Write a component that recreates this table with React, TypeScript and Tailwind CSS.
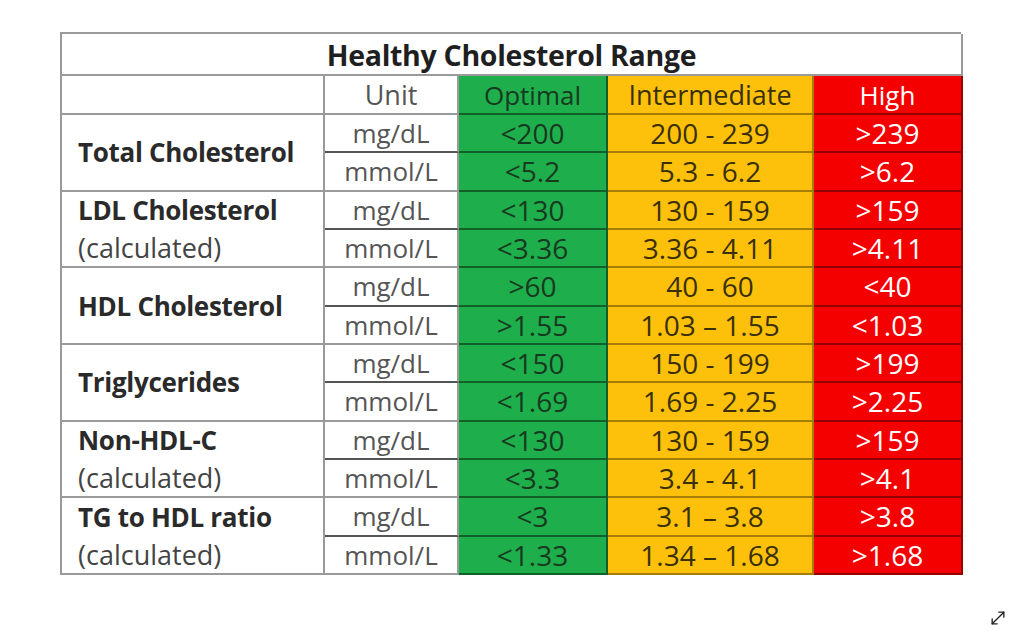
import React from "react";

type Row = { unit: string; opt: string; mid: string; high: string };
type Group = { title: string; sub?: string; rows: [Row, Row] };

const groups: Group[] = [
  {
    title: "Total Cholesterol",
    rows: [
      { unit: "mg/dL", opt: "<200", mid: "200 - 239", high: ">239" },
      { unit: "mmol/L", opt: "<5.2", mid: "5.3 - 6.2", high: ">6.2" },
    ],
  },
  {
    title: "LDL Cholesterol",
    sub: "(calculated)",
    rows: [
      { unit: "mg/dL", opt: "<130", mid: "130 - 159", high: ">159" },
      { unit: "mmol/L", opt: "<3.36", mid: "3.36 - 4.11", high: ">4.11" },
    ],
  },
  {
    title: "HDL Cholesterol",
    rows: [
      { unit: "mg/dL", opt: ">60", mid: "40 - 60", high: "<40" },
      { unit: "mmol/L", opt: ">1.55", mid: "1.03 \u2013 1.55", high: "<1.03" },
    ],
  },
  {
    title: "Triglycerides",
    rows: [
      { unit: "mg/dL", opt: "<150", mid: "150 - 199", high: ">199" },
      { unit: "mmol/L", opt: "<1.69", mid: "1.69 - 2.25", high: ">2.25" },
    ],
  },
  {
    title: "Non-HDL-C",
    sub: "(calculated)",
    rows: [
      { unit: "mg/dL", opt: "<130", mid: "130 - 159", high: ">159" },
      { unit: "mmol/L", opt: "<3.3", mid: "3.4 - 4.1", high: ">4.1" },
    ],
  },
  {
    title: "TG to HDL ratio",
    sub: "(calculated)",
    rows: [
      { unit: "mg/dL", opt: "<3", mid: "3.1 \u2013 3.8", high: ">3.8" },
      { unit: "mmol/L", opt: "<1.33", mid: "1.34 \u2013 1.68", high: ">1.68" },
    ],
  },
];

const whiteCell =
  "flex items-center justify-center border-r-2 border-b-2 border-[#9a9a9a]";
const greenCell =
  "flex items-center justify-center border-r-2 border-b-2 border-black/45 bg-[#1fae4c] text-[#173a1f]";
const yellowCell =
  "flex items-center justify-center border-r-2 border-b-2 border-black/35 bg-[#fdc10c] text-[#3a3008]";
const redCell =
  "flex items-center justify-center border-r-2 border-b-2 border-black/40 bg-[#f40000] text-white";

export default function App() {
  return (
    <div className="relative w-[1021px] h-[640px] bg-white font-['Open_Sans',sans-serif] overflow-hidden">
      <div className="pl-[60px] pt-[32px]">
        <div className="grid w-[901px] grid-cols-[263px_134px_149px_206px_149px] grid-rows-[42px_39px_repeat(12,38.33px)] border-l-2 border-t-2 border-[#9a9a9a] text-[28px] leading-none">
          <div className="col-span-5 flex items-center justify-center border-r-2 border-b-2 border-[#9a9a9a] pt-[3px] text-[28.5px] font-bold text-[#1f1f1f] tracking-[-0.3px]">
            Healthy Cholesterol Range
          </div>
          <div className={whiteCell} />
          <div className={`${whiteCell} text-[27px] text-[#555]`}>Unit</div>
          <div className={`${greenCell} text-[26px]`}>Optimal</div>
          <div className={`${yellowCell} text-[27px]`}>Intermediate</div>
          <div className={`${redCell} text-[26px]`}>High</div>
          {groups.map((g) => (
            <React.Fragment key={g.title}>
              {g.sub ? (
                <div className="row-span-2 grid grid-rows-2 border-r-2 border-b-2 border-[#9a9a9a] pl-[16px] text-[#2a2a2a]">
                  <div className="flex items-center text-[26px] font-bold tracking-[-0.3px]">
                    {g.title}
                  </div>
                  <div className="flex items-center text-[27px] text-[#444]">
                    {g.sub}
                  </div>
                </div>
              ) : (
                <div className="row-span-2 flex items-center border-r-2 border-b-2 border-[#9a9a9a] pl-[16px] text-[26px] font-bold tracking-[-0.3px] text-[#2a2a2a]">
                  {g.title}
                </div>
              )}
              {g.rows.map((r, i) => (
                <React.Fragment key={i}>
                  <div
                    className={`flex items-center justify-center border-r-2 border-b-2 text-[26px] text-[#555] ${
                      i === 0 ? "border-b-[#555]" : "border-b-[#9a9a9a]"
                    } border-r-[#9a9a9a]`}
                  >
                    {r.unit}
                  </div>
                  <div className={greenCell}>{r.opt}</div>
                  <div className={yellowCell}>{r.mid}</div>
                  <div className={redCell}>{r.high}</div>
                </React.Fragment>
              ))}
            </React.Fragment>
          ))}
        </div>
      </div>
      <svg
        className="absolute left-[988px] top-[608px]"
        width="20"
        height="20"
        viewBox="0 0 24 24"
        fill="none"
        stroke="#222"
        strokeWidth="1.6"
        strokeLinecap="round"
        strokeLinejoin="round"
      >
        <polyline points="13 5 19 5 19 11" />
        <polyline points="11 19 5 19 5 13" />
        <line x1="19" y1="5" x2="5" y2="19" />
      </svg>
    </div>
  );
}
